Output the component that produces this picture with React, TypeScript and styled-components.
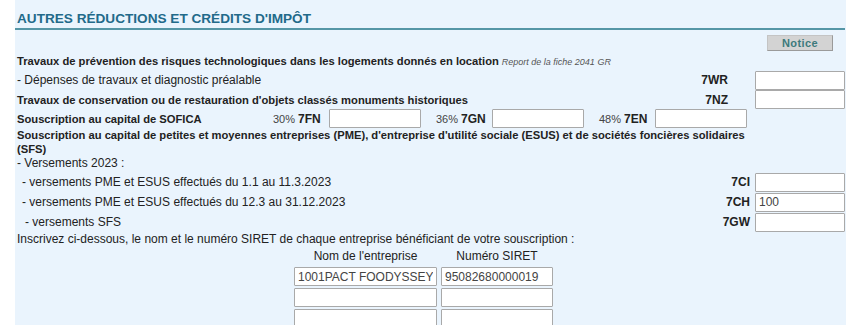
import * as React from 'react'
import styled, { createGlobalStyle } from 'styled-components'

const PANEL = '#eaf4fd'
const TEAL = '#226a8a'
const RULE = '#5596a6'
const INK = '#222222'

const GlobalStyle = createGlobalStyle`
  html, body {
    margin: 0;
    padding: 0;
    background: #ffffff;
  }
  body {
    font-family: 'Liberation Sans', Arial, sans-serif;
    font-size: 12px;
    color: ${INK};
  }
`

const Page = styled.div`
  width: 850px;
  height: 325px;
  overflow: hidden;
  display: flex;
`
const Panel = styled.div`
  margin-left: 15px;
  width: 831px;
  background: ${PANEL};
  padding: 10px 1px 0 2px;
  box-sizing: border-box;
`
const Title = styled.h2`
  margin: 0 0 0 -2px;
  padding-left: 2px;
  font-size: 13.6px;
  line-height: 18px;
  font-weight: 700;
  color: ${TEAL};
  border-bottom: 2px solid ${RULE};
`
const NoticeBar = styled.div`
  display: flex;
  justify-content: flex-end;
  margin-top: 5px;
  padding-right: 12px;
`
const NoticeButton = styled.button`
  width: 66px;
  height: 16px;
  padding: 0;
  background: #d3d3d3;
  border: 1px solid #c4c4c4;
  border-right-color: #9a9a9a;
  border-bottom-color: #9a9a9a;
  color: #3d7a7c;
  font-family: 'Liberation Sans', Arial, sans-serif;
  font-size: 11px;
  font-weight: 700;
  letter-spacing: 0.4px;
`
const Row = styled.div<{ $h?: number }>`
  display: flex;
  align-items: center;
  height: ${(p) => p.$h ?? 20}px;
`
const Label = styled.div<{ $bold?: boolean; $indent?: number }>`
  flex: 1;
  font-weight: ${(p) => (p.$bold ? 700 : 400)};
  font-size: ${(p) => (p.$bold ? 11.2 : 12)}px;
  padding-left: ${(p) => p.$indent ?? 0}px;
  white-space: nowrap;
`
const Note = styled.span`
  font-size: 9px;
  font-style: italic;
  font-weight: 400;
  color: #555;
  margin-left: 3px;
`
const Code = styled.div<{ $gap: number }>`
  font-weight: 700;
  text-align: right;
  margin-right: ${(p) => p.$gap}px;
`
const Field = styled.input<{ $w?: number }>`
  box-sizing: border-box;
  width: ${(p) => p.$w ?? 90}px;
  height: 19px;
  margin: 0;
  padding: 0 3px;
  background: #fff;
  border: 1px solid #a9a9a9;
  border-radius: 1px;
  font-family: 'Liberation Sans', Arial, sans-serif;
  font-size: 12px;
  color: #444;
  outline: none;
`
const SoficaLabel = styled.div`
  width: 256px;
  font-weight: 700;
  font-size: 11.2px;
  white-space: nowrap;
`
const RateGroup = styled.div`
  display: flex;
  align-items: center;
  margin-right: 15px;
`
const Rate = styled.span`
  width: 25px;
  font-size: 11px;
  color: #444;
`
const RateCode = styled.span`
  width: 31px;
  font-weight: 700;
`
const Block = styled.div<{ $bold?: boolean }>`
  line-height: 14px;
  font-weight: ${(p) => (p.$bold ? 700 : 400)};
  font-size: ${(p) => (p.$bold ? 11.2 : 12)}px;
`
const Companies = styled.div`
  display: grid;
  grid-template-columns: 143px 112px;
  column-gap: 4px;
  row-gap: 2px;
  margin-left: 277px;
  margin-top: 2px;
`
const ColHead = styled.div`
  text-align: center;
  line-height: 16px;
  margin-bottom: 1px;
`

const lines = [
  { code: '7CI', label: ' - versements PME et ESUS effectués du 1.1 au 11.3.2023', indent: 5 },
  { code: '7CH', label: ' - versements PME et ESUS effectués du 12.3 au 31.12.2023', indent: 5, value: '100' },
  { code: '7GW', label: '- versements SFS', indent: 8 },
]

const companies = [
  { name: '1001PACT FOODYSSEY', siret: '95082680000019' },
  { name: '', siret: '' },
  { name: '', siret: '' },
]

export default function App() {
  return (
    <Page>
      <GlobalStyle />
      <Panel>
        <Title>AUTRES RÉDUCTIONS ET CRÉDITS D'IMPÔT</Title>
        <NoticeBar>
          <NoticeButton type="button">Notice</NoticeButton>
        </NoticeBar>
        <Row $h={19}>
          <Label $bold>
            Travaux de prévention des risques technologiques dans les logements donnés en location
            <Note>Report de la fiche 2041 GR</Note>
          </Label>
        </Row>
        <Row $h={20}>
          <Label>- Dépenses de travaux et diagnostic préalable</Label>
          <Code $gap={27}>7WR</Code>
          <Field readOnly />
        </Row>
        <Row $h={19}>
          <Label $bold>Travaux de conservation ou de restauration d'objets classés monuments historiques</Label>
          <Code $gap={27}>7NZ</Code>
          <Field readOnly />
        </Row>
        <Row $h={19}>
          <SoficaLabel>Souscription au capital de SOFICA</SoficaLabel>
          {[
            ['30%', '7FN'],
            ['36%', '7GN'],
            ['48%', '7EN'],
          ].map(([rate, code]) => (
            <RateGroup key={code}>
              <Rate>{rate}</Rate>
              <RateCode>{code}</RateCode>
              <Field readOnly $w={92} />
            </RateGroup>
          ))}
        </Row>
        <Block $bold>
          Souscription au capital de petites et moyennes entreprises (PME), d'entreprise d'utilité sociale (ESUS) et de sociétés foncières solidaires
          <br />
          (SFS)
        </Block>
        <Block>- Versements 2023 :</Block>
        <div style={{ height: 2 }} />
        {lines.map((l) => (
          <Row key={l.code} $h={20}>
            <Label $indent={l.indent}>{l.label}</Label>
            <Code $gap={5}>{l.code}</Code>
            <Field readOnly defaultValue={l.value} />
          </Row>
        ))}
        <Block>
          Inscrivez ci-dessous, le nom et le numéro SIRET de chaque entreprise bénéficiant de votre souscription :
        </Block>
        <Companies>
          <ColHead>Nom de l'entreprise</ColHead>
          <ColHead>Numéro SIRET</ColHead>
          {companies.map((c, i) => (
            <React.Fragment key={i}>
              <Field readOnly $w={143} defaultValue={c.name} />
              <Field readOnly $w={112} defaultValue={c.siret} />
            </React.Fragment>
          ))}
        </Companies>
      </Panel>
    </Page>
  )
}
